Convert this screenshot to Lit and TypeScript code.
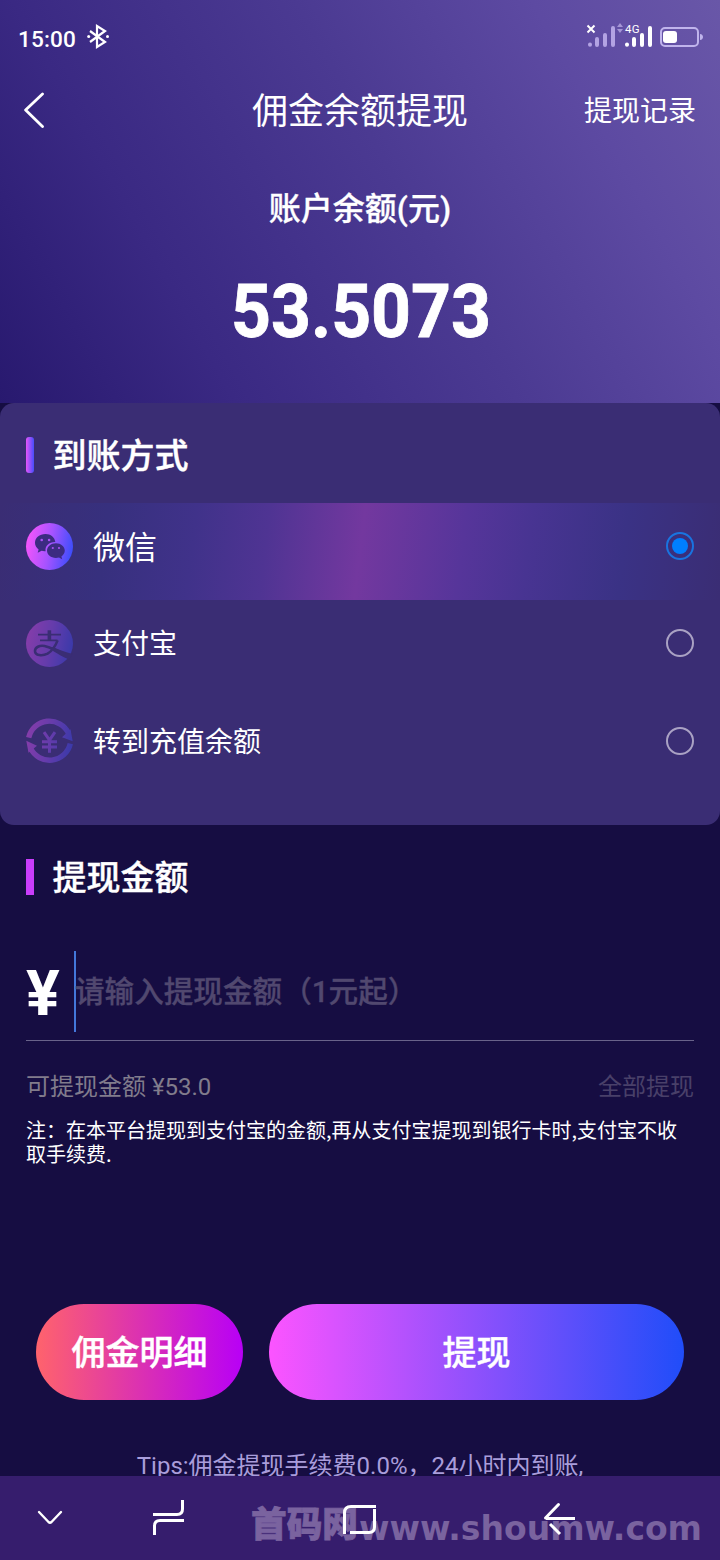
import { LitElement, html, svg, css } from "lit";
import { customElement, state } from "lit/decorators.js";

const wechat = svg`
  <circle cx="23.500" cy="23.500" r="23.500" fill="url(#g)"/>
  <path fill="#3c2b82" d="M19.500 11C13.500 11 9 14.900 9 19.800c0 2.700 1.400 5 3.600 6.600l-.9 3.300 3.900-1.900c1.300.4 2.600.5 4 .4-.9-5.200 3.700-9.300 9.700-9.100C28.800 14.400 24.700 11 19.500 11z"/>
  <path fill="#3c2b82" d="M29.900 20.200c-5 0-8.900 3.300-8.900 7.400s3.900 7.400 8.900 7.400c1.100 0 2.100-.2 3.100-.4l3.200 1.600-.8-2.700c2-1.400 3.400-3.500 3.400-5.900 0-4.100-4-7.400-8.900-7.400z"/>
  <g fill="#a951f5"><circle cx="15.700" cy="17" r="1.300"/><circle cx="23.100" cy="17" r="1.300"/><circle cx="26.800" cy="25" r="1.100"/><circle cx="33" cy="25" r="1.100"/></g>`;

const alipay = svg`
  <circle cx="23.500" cy="23.500" r="23.500" fill="url(#g)"/>
  <g fill="none" stroke="#3a2d74" stroke-linejoin="round">
    <path stroke-width="1.900" d="M12 14.600h23M14 20.400h17.500"/>
    <path stroke-width="3.600" d="M23.400 10.300v10"/>
    <path stroke-width="2.600" d="M31.600 20.400c-2.300 6-5.500 10.700-10 13.200-5.300 2.700-12.600 2-12.600-2.700 0-3.700 4.600-5.800 9.500-4.900 5.500 1.200 10 3.800 15 5.600"/>
  </g>
  <path fill="#3a2d74" d="M27 27c5 2.400 11 4.800 19.500 7l-3.500 5.500c-6.500-2.700-10.500-5.200-16-8.500z"/>`;

const transfer = svg`
  <g transform="translate(0 -.8)">
  <g fill="none" stroke="url(#g)" stroke-width="5.400">
    <path d="M2.700 20.500A21.200 21.200 0 0 1 42.500 16"/>
    <path d="M44.300 26.500A21.200 21.200 0 0 1 4.500 31"/>
  </g>
  <path fill="url(#g)" d="M36 20l8.500-8 2.200 12zM11 28.500L2.500 35.500.3 23.500z"/>
  <path fill="none" stroke="url(#g)" stroke-width="3" d="M18 15l5.500 8 5.500-8M16 24.500h15M16 29.700h15M23.500 23v12.500"/>
  </g>`;

@customElement("pay-icon")
class PayIcon extends LitElement {
  static properties = { kind: {} };
  declare kind: string;
  static styles = css`
    :host { display: block; width: 47px; height: 47px; }
    svg { display: block; overflow: visible; }
  `;
  render() {
    const art = this.kind === "wechat" ? wechat : this.kind === "alipay" ? alipay : transfer;
    return html`<svg width="47" height="47" viewBox="0 0 47 47">
      <defs><linearGradient id="g" gradientUnits="userSpaceOnUse" x1="0" y1="19" x2="47" y2="28">
        <stop offset="0" stop-color="#f555fb"/><stop offset=".5" stop-color="#a653ff"/><stop offset="1" stop-color="#3b4dfb"/>
      </linearGradient></defs>${art}</svg>`;
  }
}

@customElement("app-root")
class AppRoot extends LitElement {
  @state() private selected = "wechat";

  private methods = [
    { id: "wechat", label: "微信" },
    { id: "alipay", label: "支付宝" },
    { id: "balance", label: "转到充值余额" },
  ];

  static styles = css`
    :host {
      display: flex; flex-direction: column; position: relative;
      box-sizing: border-box; width: 720px; height: 1560px; overflow: hidden;
      background: #160d42; color: #fff;
      font-family: Roboto, "Noto Sans CJK SC", sans-serif;
    }
    * { box-sizing: border-box; }
    svg { display: block; flex: none; }
    .hero {
      flex: none; height: 403px;
      background: linear-gradient(61deg, #28196f 0%, #3a2983 25%, #4b3a92 55%, #5d4aa2 80%, #6957a8 100%);
    }
    .status { display: flex; align-items: flex-start; height: 74px; padding-left: 18px; }
    .time { margin-top: 26px; width: 69px; font-size: 22.600px; line-height: 28px; font-weight: 500; letter-spacing: .1px; }
    .bt { margin-top: 24px; }
    .sys { margin: 20px 14px 0 auto; }
    .bar { display: grid; grid-template-columns: 160px 1fr 160px; align-items: center; height: 72px; padding: 0 24px; }
    .title { margin-top: 4px; text-align: center; font-size: 36px; line-height: 50px; }
    .record { margin-top: 4px; text-align: right; font-size: 28px; line-height: 40px; }
    .caption { margin-top: 40px; text-align: center; font-size: 32px; line-height: 46px; font-weight: 500; -webkit-text-stroke: .3px; }
    .total { margin: 28px 0 0 230px; overflow: visible; }
    .card { flex: none; height: 422px; border-radius: 14px; background: #3a2d74; }
    .heading { display: flex; align-items: center; gap: 18.500px; height: 100px; padding: 5px 26px 0; font-size: 34px; font-weight: 500; line-height: 48px; -webkit-text-stroke: .4px; }
    .mark { width: 8px; height: 36px; margin-top: -1px; background: #c93dfb; }
    .card .mark { border-radius: 3px; background: linear-gradient(90deg, #e455fb, #474dfb); }
    .method { display: flex; align-items: center; height: 97px; padding: 0 26px 10px; cursor: pointer; }
    .method:last-child { height: 99px; }
    .method.on { background: linear-gradient(97deg, #3a2d74 0%, #37307e 15%, #40328a 27%, #4f3493 37%, #73389f 50%, #56359a 64%, #483492 73%, #3a3285 86%, #3a2d74 100%); }
    .method pay-icon { opacity: .4; }
    .method.on pay-icon { opacity: 1; }
    .label { margin: 2px auto 0 20px; font-size: 28px; line-height: 40px; }
    .on .label { font-size: 32px; }
    .radio { display: grid; place-items: center; width: 28px; height: 28px; margin-top: -1px; border: 2px solid #aaa2c4; border-radius: 50%; }
    .on .radio { border-color: #1974e0; }
    .on .radio::after { content: ""; width: 16px; height: 16px; border-radius: 50%; background: #007fff; }
    .amount { flex: 1; }
    .field { display: flex; height: 116px; margin: 0 26px; padding-top: 26px; border-bottom: 1px solid #69638a; }
    .yen { width: 48px; font-size: 63px; line-height: 81px; font-weight: 700; margin-top: 2px; }
    .caret { width: 2px; height: 81px; background: #4377da; }
    .placeholder { font-size: 29.600px; line-height: 83px; font-weight: 500; color: #51486f; margin-left: -1px; -webkit-text-stroke: .3px; }
    .avail { display: flex; justify-content: space-between; padding: 28px 26px 0; font-size: 24px; line-height: 36px; color: #817c8c; }
    .all { color: #494069; }
    .note { margin: 13px 26px 0; font-family: "Noto Sans CJK SC", sans-serif; font-size: 20px; line-height: 24px; white-space: nowrap; }
    .actions { display: flex; gap: 26px; padding: 138px 36px 0; }
    .btn { height: 96px; border-radius: 48px; text-align: center; font-size: 34px; line-height: 98px; font-weight: 500; -webkit-text-stroke: .4px; }
    .detail { width: 207px; background: linear-gradient(90deg, #ff636c, #b800f6); }
    .submit { width: 415px; background: linear-gradient(90deg, #fc54ff, #204df9); }
    .tips { margin-top: 48px; text-align: center; font-size: 24px; line-height: 36px; color: #a99ddb; }
    .nav { position: absolute; left: 0; bottom: 0; width: 720px; height: 84px; background: #361d6d; }
  `;

  render() {
    return html`
      <div class="hero">
        <div class="status">
          <span class="time">15:00</span>
          <svg class="bt" width="24" height="26" fill="none" stroke="#fff" stroke-width="2.200">
            <path d="M3 7l15 11-8 5V2l8 5L3 18"/>
            <circle cx="1.700" cy="12.500" r="1.500" fill="#fff" stroke="none"/><circle cx="20.500" cy="12.500" r="1.500" fill="#fff" stroke="none"/>
          </svg>
          <svg class="sys" width="120" height="30" fill="none" stroke-linecap="round">
            <path stroke="#fff" stroke-width="2" stroke-linecap="butt" d="M1.500 5.500l7 7M8.500 5.500l-7 7"/>
            <path stroke="#b3a3e3" stroke-width="4" d="M4 24.600v.2M11 19v6M19 15v10M27 8v17"/>
            <path fill="#a696d6" d="M34 3l3 4h-6zM34 13l3-4h-6z"/>
            <path stroke="#fff" stroke-width="4" d="M41 24.600v.2M48 19v6M56 15v10M64 8v17"/>
            <text x="39" y="13" fill="#fff" font-size="11.500" letter-spacing=".2">4G</text>
            <rect x="75" y="8" width="37" height="18" rx="4" stroke="#c0b4ec" stroke-width="2"/>
            <rect x="77" y="11" width="14" height="12" rx="3" fill="#fff"/>
            <path fill="#c0b4ec" d="M114 14c4 0 4 6 0 6z"/>
          </svg>
        </div>
        <div class="bar">
          <svg width="24" height="40" fill="none" stroke="#fff" stroke-width="2.800" stroke-linecap="round" stroke-linejoin="round"><path d="M18.500 4L1.600 20l16.900 16.500"/></svg>
          <span class="title">佣金余额提现</span>
          <span class="record">提现记录</span>
        </div>
        <div class="caption">账户余额(元)</div>
        <svg class="total" width="264" height="96" fill="#fff">
          <text x="1" y="77" font-size="74" font-weight="700" textLength="260" lengthAdjust="spacingAndGlyphs" stroke="#fff" stroke-width=".8">53.5073</text>
        </svg>
      </div>

      <div class="card">
        <div class="heading"><span class="mark"></span>到账方式</div>
        ${this.methods.map((m) => html`
          <div class="method ${m.id === this.selected ? "on" : ""}" @click=${() => (this.selected = m.id)}>
            <pay-icon .kind=${m.id}></pay-icon>
            <span class="label">${m.label}</span>
            <span class="radio"></span>
          </div>`)}
      </div>

      <div class="amount">
        <div class="heading"><span class="mark"></span>提现金额</div>
        <div class="field">
          <span class="yen">¥</span><span class="caret"></span>
          <span class="placeholder">请输入提现金额（1元起）</span>
        </div>
        <div class="avail"><span>可提现金额 ¥53.0</span><span class="all">全部提现</span></div>
        <div class="note">注：在本平台提现到支付宝的金额,再从支付宝提现到银行卡时,支付宝不收<br>取手续费.</div>
        <div class="actions">
          <div class="btn detail">佣金明细</div>
          <div class="btn submit">提现</div>
        </div>
        <div class="tips">Tips:佣金提现手续费0.0%，24小时内到账,</div>
      </div>

      <div class="nav">
        <svg width="720" height="84" fill="none" stroke="#fff" stroke-width="3">
          <g fill="#7a639f" stroke="none" font-weight="900">
            <text x="251" y="61" font-size="35" font-family="Noto Sans CJK SC" textLength="107" lengthAdjust="spacingAndGlyphs" stroke="#7a639f" stroke-width=".8">首码网</text>
            <text x="359" y="64" font-size="34" font-family="DejaVu Sans" font-weight="700" textLength="343" lengthAdjust="spacingAndGlyphs">www.shoumw.com</text>
          </g>
          <path stroke-width="2.400" stroke-linecap="round" stroke-linejoin="round" d="M39 36l9.500 10q1.500 1.400 3 0L61 36"/>
          <path d="M182.500 24v9q0 5.500-5.500 5.500h-24M154.500 59v-9q0-5.500 5.500-5.500h24"/>
          <path d="M344.500 58V37q0-6.500 6.500-6.500h25M374.500 33v18q0 5.500-5.500 5.500h-19"/>
          <path d="M575 42.500h-29"/><path stroke-linecap="round" d="M545.500 42L558.500 28.500"/><path d="M550 48l10 10"/>
        </svg>
      </div>
    `;
  }
}
